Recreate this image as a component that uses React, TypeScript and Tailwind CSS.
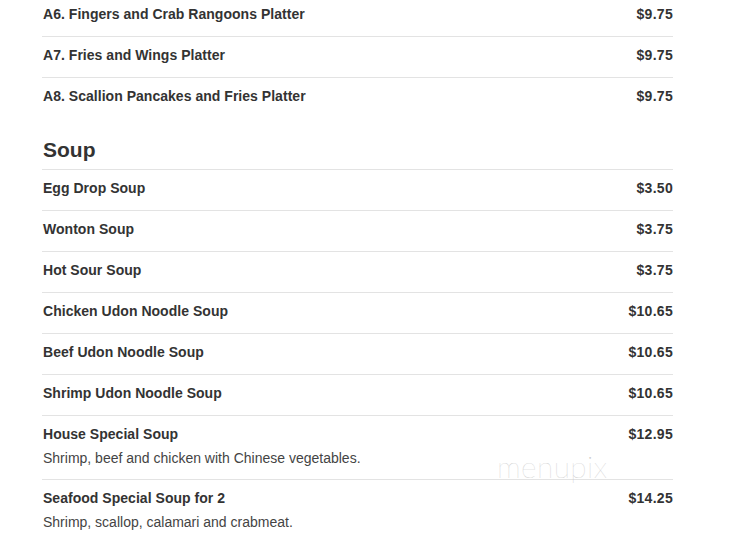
import React from "react";

type Item = { name: string; price: string; desc?: string };

const apps: Item[] = [
  { name: "A6. Fingers and Crab Rangoons Platter", price: "$9.75" },
  { name: "A7. Fries and Wings Platter", price: "$9.75" },
  { name: "A8. Scallion Pancakes and Fries Platter", price: "$9.75" },
];

const soups: Item[] = [
  { name: "Egg Drop Soup", price: "$3.50" },
  { name: "Wonton Soup", price: "$3.75" },
  { name: "Hot Sour Soup", price: "$3.75" },
  { name: "Chicken Udon Noodle Soup", price: "$10.65" },
  { name: "Beef Udon Noodle Soup", price: "$10.65" },
  { name: "Shrimp Udon Noodle Soup", price: "$10.65" },
  { name: "House Special Soup", price: "$12.95", desc: "Shrimp, beef and chicken with Chinese vegetables." },
  { name: "Seafood Special Soup for 2", price: "$14.25", desc: "Shrimp, scallop, calamari and crabmeat." },
];

function Row({ item, first }: { item: Item; first?: boolean }) {
  return (
    <div className={`flex justify-between pt-2 ${item.desc ? "pb-[11px]" : "pb-3"} ${first ? "" : "border-t border-[#e3e3e3]"}`}>
      <div className="pl-px">
        <div className="text-[14px] leading-5 font-bold tracking-[0.03px] text-[#333]">{item.name}</div>
        {item.desc && (
          <div className="mt-1 text-[14px] leading-5 text-[#444]">{item.desc}</div>
        )}
      </div>
      <div className="text-[14px] leading-5 font-bold tracking-[0.3px] text-[#333]">{item.price}</div>
    </div>
  );
}

export default function App() {
  return (
    <div
      className="relative w-[731px] h-[551px] overflow-hidden bg-white"
      style={{ fontFamily: '"Liberation Sans", Arial, sans-serif' }}
    >
      <div className="ml-[42px] w-[631px] -mt-[5px]">
        <div className="border-t border-[#e3e3e3]" />
        {apps.map((it, i) => (
          <Row key={i} item={it} first={i === 0} />
        ))}
        <div className="mt-[18px] pb-[5px] pl-px text-[21px] leading-7 font-bold text-[#333] border-b border-[#e3e3e3]">
          Soup
        </div>
        {soups.map((it, i) => (
          <Row key={i} item={it} first={i === 0} />
        ))}
      </div>
      <div
        className="absolute left-[497px] top-[451px] text-[30px] leading-none tracking-[0.4px] text-[#c9c9c9]"
        style={{ fontFamily: 'Lato, "Open Sans", sans-serif', fontWeight: 200 }}
      >
        menupix
      </div>
    </div>
  );
}
